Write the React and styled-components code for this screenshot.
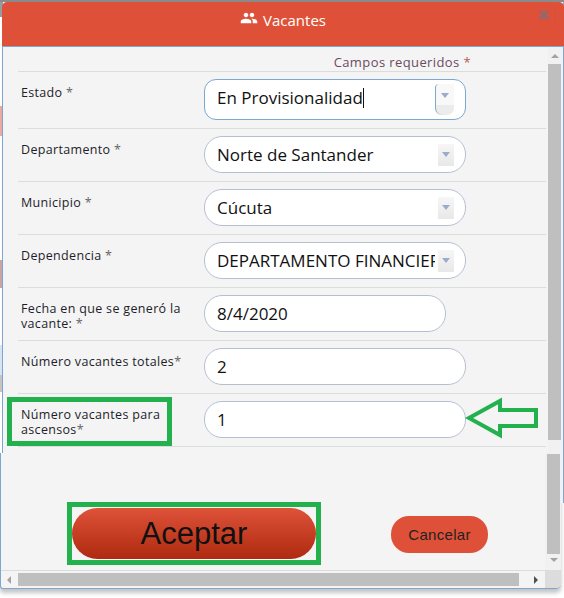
import { createGlobalStyle } from "styled-components";
import styled from "styled-components";
import { MdPeople } from "react-icons/md";

const GlobalStyle = createGlobalStyle`
  html, body {
    margin: 0;
    padding: 0;
    background: #fff;
  }
`;

const BLUE = "#7ba7d1";
const RED = "#de5138";
const GREEN = "#22b14c";
const FONT = `"Open Sans", "Noto Sans", sans-serif`;

const Page = styled.div`
  width: 564px;
  height: 598px;
  overflow: hidden;
  box-sizing: border-box;
  padding-top: 2px;
  font-family: ${FONT};
  background-color: #fff;
  background-repeat: no-repeat;
  background-image:
    linear-gradient(#8a8a8a, #8a8a8a),
    linear-gradient(
      to bottom,
      #9a9a9a 0 17px,
      #fff 17px 106px,
      #eda9a1 106px 136px,
      #fff 136px 260px,
      #c9a3a5 260px 288px,
      #fff 288px 345px,
      #d5e6f2 345px 375px,
      #c4c4c4 375px 392px,
      #fff 392px
    );
  background-size: 564px 2px, 2px 453px;
`;

const UpperPanel = styled.section`
  margin-left: 2px;
  width: 562px;
  height: 451px;
  box-sizing: border-box;
  display: flex;
  flex-direction: column;
  background: #f4f4f4;
  border-left: 1px solid ${BLUE};
  border-right: 1px solid ${BLUE};
`;

const Header = styled.header`
  position: relative;
  height: 45px;
  margin: 0 -1px;
  flex: none;
  box-sizing: border-box;
  display: flex;
  align-items: center;
  justify-content: center;
  gap: 5px;
  padding: 0 0 8px 0;
  background: ${RED};
  border-bottom: 1px solid ${BLUE};
  border-radius: 5px 5px 0 0;
  color: #fff;
  font-size: 15px;

  svg:first-child {
    margin-top: -5px;
  }
`;

const CloseButton = styled.svg`
  position: absolute;
  right: 14px;
  top: 7px;
`;

const HeaderRule = styled.span`
  position: absolute;
  right: 8px;
  top: 8px;
  width: 1px;
  height: 12px;
  background: #d0503a;
`;

const UpperBody = styled.div`
  flex: 1;
  display: flex;
  min-height: 0;
`;

const Form = styled.div`
  flex: 1;
  box-sizing: border-box;
  padding: 0 2px 0 15px;
`;

const RequiredNote = styled.div`
  height: 24px;
  box-sizing: border-box;
  padding: 6px 75px 0 0;
  text-align: right;
  font-size: 13px;
  line-height: 18px;
  letter-spacing: 0.4px;
  color: #6b4b60;

  span {
    color: #b0604f;
  }
`;

const Row = styled.div`
  position: relative;
  display: grid;
  grid-template-columns: 186px 1fr;
  padding: 7px 0 8px;
  border-top: 1px solid #dcdcdc;

  &:last-child {
    border-bottom: 1px solid #dcdcdc;
  }
`;

const Label = styled.label`
  padding: 6px 0 0 3px;
  font-size: 12.5px;
  line-height: 15px;
  letter-spacing: 0.33px;
  color: #1d1d2b;

  i {
    font-style: normal;
    color: #666;
  }
`;

const Highlight = styled.span`
  position: absolute;
  left: -11px;
  top: 3px;
  width: 165px;
  height: 49px;
  box-sizing: border-box;
  border: 5px solid ${GREEN};
`;

const ArrowMark = styled.svg`
  position: absolute;
  left: 447px;
  top: 3px;
`;

const Field = styled.div`
  box-sizing: border-box;
  width: ${(props) => (props.$short ? "242px" : "262px")};
  height: ${(props) => (props.$focused ? "41px" : "37px")};
  display: flex;
  align-items: center;
  padding: 0 11px 0 12px;
  background: #fff;
  border: 1px solid ${(props) => (props.$focused ? BLUE : "#b6bfd2")};
  border-radius: ${(props) => (props.$focused ? "12px" : "18px")};
  font-size: 17px;
  color: #111;
`;

const FieldText = styled.span`
  flex: 1;
  min-width: 0;
  margin-right: ${(props) => (props.$focused ? "0" : "3px")};
  padding-bottom: ${(props) => (props.$focused ? "4px" : "0")};
  overflow: hidden;
  white-space: nowrap;
`;

const Caret = styled.span`
  display: inline-block;
  width: 1px;
  height: 20px;
  vertical-align: -4px;
  background: #111;
`;

const SelectButton = styled.span`
  flex: none;
  box-sizing: border-box;
  width: ${(props) => (props.$focused ? "19px" : "16px")};
  height: ${(props) => (props.$focused ? "31px" : "22px")};
  display: flex;
  justify-content: center;
  padding-top: ${(props) => (props.$focused ? "9px" : "8px")};
  background: ${(props) =>
    props.$focused
      ? "linear-gradient(to bottom, #f8f8f8 0 68%, #ececec 68%)"
      : "linear-gradient(to bottom, #f6f6f6, #e8e8e8)"};
  border-left: ${(props) => (props.$focused ? `1px solid ${BLUE}` : "none")};
  border-radius: ${(props) => (props.$focused ? "4px 0 7px 7px" : "0")};

  &::after {
    content: "";
    width: 0;
    height: 0;
    border-left: 4px solid transparent;
    border-right: 4px solid transparent;
    border-top: 5px solid #9aabcb;
  }
`;

const UpperScroll = styled.div`
  flex: none;
  width: 15px;
  background: #f1f1f1;
`;

const ArrowCell = styled.div`
  height: ${(props) => props.$height};
  display: flex;
  align-items: center;
  justify-content: ${(props) => (props.$center ? "center" : "flex-start")};
  padding-left: ${(props) => (props.$center ? "0" : "3px")};
  box-sizing: border-box;

  &::after {
    content: "";
    width: 0;
    height: 0;
    border-left: 4px solid transparent;
    border-right: 4px solid transparent;
    ${(props) =>
      props.$down
        ? "border-top: 4px solid #a3a3a3;"
        : "border-bottom: 4px solid #a3a3a3;"}
  }
`;

const UpperThumb = styled.div`
  width: 13px;
  height: 376px;
  background: #bfbfbf;
`;

const LowerWrap = styled.div`
  display: flex;
  align-items: flex-start;
`;

const LowerPanel = styled.section`
  width: 561px;
  height: 136px;
  flex: none;
  box-sizing: border-box;
  display: flex;
  flex-direction: column;
  background: #f4f4f4;
  border-left: 1px solid ${BLUE};
  border-bottom: 1px solid ${BLUE};
  border-radius: 0 0 5px 3px;
  box-shadow: 0 4px 4px #c4c4c4;
`;

const RightSliver = styled.div`
  width: 3px;
  height: 50px;
  box-sizing: border-box;
  background: #f1f1f1;
  border-right: 1px solid ${BLUE};
`;

const LowerBody = styled.div`
  flex: none;
  height: 117px;
  display: flex;
`;

const Actions = styled.div`
  flex: 1;
  display: flex;
  align-items: flex-start;
  padding: 49px 0 0 66px;
`;

const AcceptFrame = styled.div`
  box-sizing: border-box;
  width: 254px;
  height: 63px;
  padding: 1px 0 1px 0;
  border: 5px solid ${GREEN};
`;

const AcceptButton = styled.button`
  display: block;
  width: 244px;
  height: 51px;
  padding: 0;
  border: none;
  border-radius: 26px;
  background: linear-gradient(to bottom, #de5238, #ae2a10);
  font-family: "Liberation Sans", Arial, sans-serif;
  font-size: 31px;
  color: #111;
`;

const CancelButton = styled.button`
  width: 97px;
  height: 37px;
  margin: 14px 0 0 70px;
  padding: 0;
  border: none;
  border-radius: 18px;
  background: ${RED};
  font-family: "Liberation Sans", Arial, sans-serif;
  font-size: 15px;
  letter-spacing: 0.3px;
  color: #222;
`;

const LowerScroll = styled.div`
  flex: none;
  width: 16px;
  box-sizing: border-box;
  padding: 1px 1px 0 2px;
  background: #f1f1f1;
`;

const LowerThumb = styled.div`
  width: 13px;
  height: 100px;
  background: #bfbfbf;
`;

const HorizontalBar = styled.div`
  flex: 1;
  display: flex;
  align-items: stretch;
  border-top: 1px solid #dcdcdc;
`;

const HorizontalTrack = styled.div`
  flex: 1;
  display: flex;
  align-items: center;
  padding-top: 1px;
  padding-bottom: 1px;
  box-sizing: border-box;
`;

const SideArrow = styled.span`
  width: 0;
  height: 0;
  border-top: 4px solid transparent;
  border-bottom: 4px solid transparent;
  ${(props) =>
    props.$right
      ? "border-left: 4px solid #505050; margin: 0 0 0 15px;"
      : "border-right: 4px solid #a3a3a3; margin: 0 7px 0 6px;"}
`;

const HorizontalThumb = styled.div`
  width: 501px;
  height: 13px;
  background: #bfbfbf;
`;

const Corner = styled.div`
  flex: none;
  width: 16px;
  margin-left: auto;
  background: #dcdcdc;
  border-radius: 0 0 5px 0;
`;

const fields = [
  { label: "Estado", mark: " *", value: "En Provisionalidad", select: true, focused: true },
  { label: "Departamento", mark: " *", value: "Norte de Santander", select: true },
  { label: "Municipio", mark: " *", value: "Cúcuta", select: true },
  { label: "Dependencia", mark: " *", value: "DEPARTAMENTO FINANCIERO", select: true },
  { label: "Fecha en que se generó la vacante:", mark: " *", value: "8/4/2020", short: true },
  { label: "Número vacantes totales", mark: "*", value: "2" },
  { label: "Número vacantes para ascensos", mark: "*", value: "1", annotated: true },
];

function FormRow({ field }) {
  return (
    <Row>
      <Label>
        {field.label}
        <i>{field.mark}</i>
      </Label>
      <Field $short={field.short} $focused={field.focused}>
        <FieldText $focused={field.focused}>
          {field.value}
          {field.focused && <Caret />}
        </FieldText>
        {field.select && <SelectButton $focused={field.focused} />}
      </Field>
      {field.annotated && (
        <>
          <Highlight />
          <ArrowMark width="75" height="42" viewBox="0 0 75 42">
            <path
              d="M4 21 L35 4 V13 H71 V29 H35 V38 Z"
              fill="none"
              stroke={GREEN}
              strokeWidth="4"
            />
          </ArrowMark>
        </>
      )}
    </Row>
  );
}

export default function App() {
  return (
    <Page>
      <GlobalStyle />
      <UpperPanel>
        <Header>
          <MdPeople size={18} />
          Vacantes
          <CloseButton width="12" height="12" viewBox="0 0 12 12">
            <path
              d="M2 2 L10 10 M10 2 L2 10"
              stroke="#8b6a72"
              strokeWidth="2.6"
              fill="none"
            />
          </CloseButton>
          <HeaderRule />
        </Header>
        <UpperBody>
          <Form>
            <RequiredNote>
              Campos requeridos <span>*</span>
            </RequiredNote>
            {fields.map((field) => (
              <FormRow key={field.label} field={field} />
            ))}
          </Form>
          <UpperScroll>
            <ArrowCell $height="17px" />
            <UpperThumb />
          </UpperScroll>
        </UpperBody>
      </UpperPanel>
      <LowerWrap>
        <LowerPanel>
          <LowerBody>
            <Actions>
              <AcceptFrame>
                <AcceptButton>Aceptar</AcceptButton>
              </AcceptFrame>
              <CancelButton>Cancelar</CancelButton>
            </Actions>
            <LowerScroll>
              <LowerThumb />
              <ArrowCell $height="12px" $center $down />
            </LowerScroll>
          </LowerBody>
          <HorizontalBar>
            <HorizontalTrack>
              <SideArrow />
              <HorizontalThumb />
              <SideArrow $right />
            </HorizontalTrack>
            <Corner />
          </HorizontalBar>
        </LowerPanel>
        <RightSliver />
      </LowerWrap>
    </Page>
  );
}
